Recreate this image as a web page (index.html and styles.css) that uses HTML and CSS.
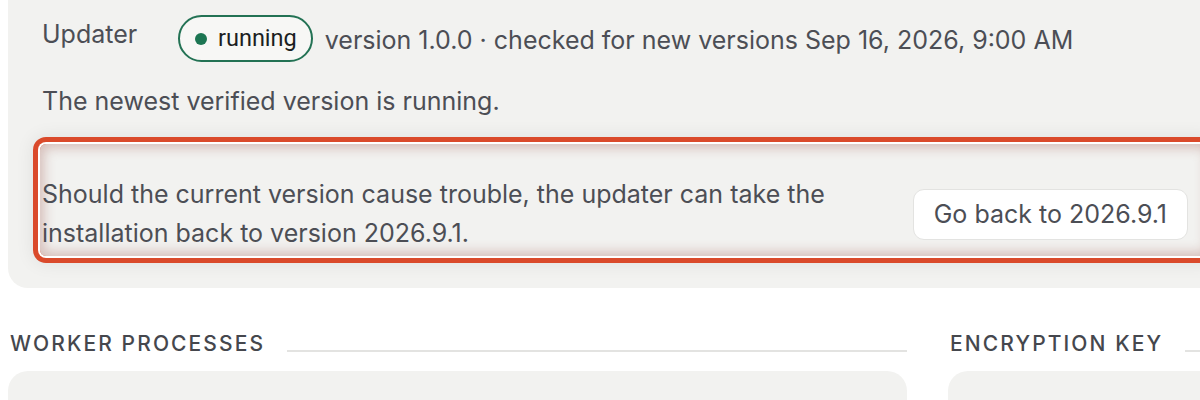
FILE: index.html
```html
<!DOCTYPE html>
<html lang="en">
  <head>
    <meta charset="UTF-8" />
    <meta name="viewport" content="width=device-width, initial-scale=1.0" />
    <title>Updater</title>
    <link rel="stylesheet" href="styles.css">
  </head>
  <body>
    <div class="page">
      <!-- updater card -->
      <section class="card updater">
        <div class="status-row">
          <div class="label">Updater</div>
          <div class="status">
            <span class="pill"><span class="dot"></span>running</span>
            <span class="meta">version 1.0.0 · checked for new versions Sep 16, 2026, 9:00 AM</span>
          </div>
        </div>
        <p class="note">The newest verified version is running.</p>
        <div class="rollback">
          <p>Should the current version cause trouble, the updater can take the installation back to version 2026.9.1.</p>
          <button class="btn">Go back to 2026.9.1</button>
        </div>
      </section>

      <!-- lower columns -->
      <div class="cols">
        <section class="col">
          <h3 class="sec-title"><span>Worker processes</span></h3>
          <div class="card panel"></div>
        </section>
        <section class="col">
          <h3 class="sec-title"><span>Encryption key</span></h3>
          <div class="card panel"></div>
        </section>
      </div>
    </div>
  </body>
</html>
```

FILE: styles.css
```css
/* reset */
html,
body,
h3,
p {
  margin: 0;
  padding: 0;
}
body {
  background: #fff;
  overflow: hidden;
  font-family: Inter, "Noto Sans", sans-serif;
  font-size: 25px;
  color: #4c4e55;
}

.page {
  width: 1244px;
  padding: 0 0 0 8px;
  box-sizing: border-box;
}

/* common card */
.card {
  background: #f2f2f0;
  border-radius: 20px;
}

/* updater card */
.updater {
  margin-top: -20px;
  padding: 35px 34px 32px;
}
.status-row {
  display: flex;
  align-items: flex-start;
}
.label {
  width: 136px;
  line-height: 38px;
}
.status {
  display: flex;
  align-items: center;
}
.pill {
  display: inline-flex;
  align-items: center;
  gap: 11px;
  height: 43px;
  padding: 0 14px 0 15px;
  border: 2px solid #237254;
  border-radius: 30px;
  background: #f7f7f5;
  font-family: Roboto, Inter, sans-serif;
  font-size: 23.5px;
  color: #1b1e22;
  line-height: 43px;
}
.dot {
  width: 12px;
  height: 12px;
  border-radius: 50%;
  background: #1c7552;
}
.meta {
  margin-left: 12px;
  padding-top: 2px;
}
.note {
  margin-top: 20px;
  line-height: 39px;
}

/* highlighted rollback row */
.rollback {
  display: flex;
  align-items: center;
  gap: 24px;
  margin: 23px 0 0 -2px;
  padding: 31px 22px 3px 2px;
  border-radius: 6px;
  box-shadow: 0 0 0 2px #fff, 0 0 0 7px #da4a2b, 0 0 18px 8px rgba(0, 0, 0, 0.07),
    inset 0 0 12px 4px rgba(150, 70, 60, 0.3);
}
.rollback p {
  flex: 1;
  line-height: 39px;
}
.btn {
  flex: none;
  height: 51px;
  padding: 0 20px;
  border: 1px solid #e3e3e1;
  border-radius: 11px;
  background: #fff;
  font-family: inherit;
  font-size: 25px;
  color: #4c4e55;
}

/* lower columns */
.cols {
  display: grid;
  grid-template-columns: 899px 1fr;
  column-gap: 41px;
  margin-top: 41px;
}
.sec-title {
  display: flex;
  align-items: center;
  padding-left: 2px;
  font-size: 21px;
  font-weight: 500;
  letter-spacing: 2.1px;
  text-transform: uppercase;
  line-height: 30px;
  color: #45474d;
}
.sec-title::after {
  content: "";
  flex: 1;
  height: 2px;
  margin: 14px 0 0 22px;
  background: #e3e3e1;
}
.panel {
  height: 80px;
  margin-top: 12px;
}
```
